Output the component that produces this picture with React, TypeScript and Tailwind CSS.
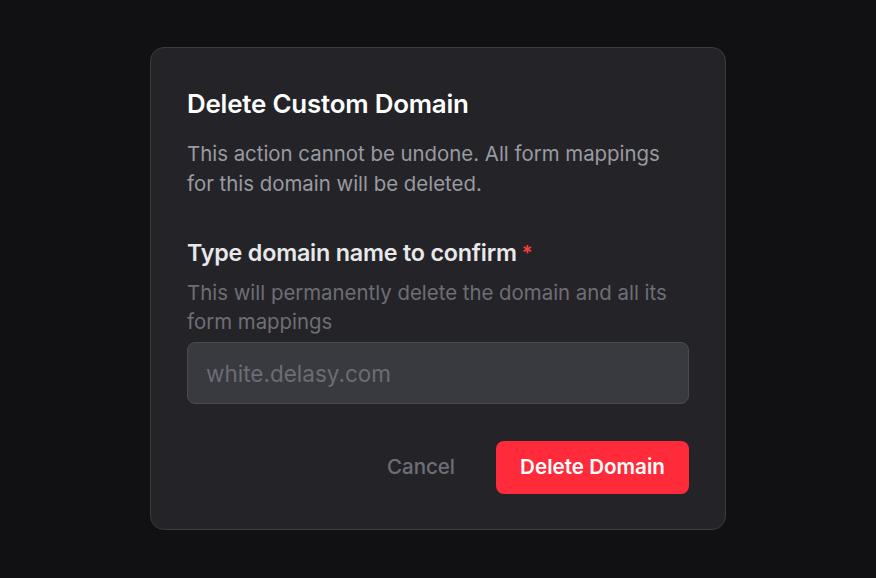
export default function App() {
  return (
    <div className="w-[876px] h-[578px] bg-[#111113] flex items-start justify-center pt-[47px]" style={{ fontFamily: 'Inter, "Noto Sans", sans-serif' }}>
      <div className="w-[576px] h-[483px] rounded-[14px] border border-[#3a3a3f] bg-[#242428] px-[36px] pt-[40px] flex flex-col">
        <h2 className="text-[25.9px] leading-[32px] font-semibold tracking-[-0.2px] text-white">Delete Custom Domain</h2>
        <p className="mt-[19px] text-[20.4px] leading-[30px] text-[#9a9aa1]">
          This action cannot be undone. All form mappings for this domain will be deleted.
        </p>
        <div className="mt-[39px] flex items-center gap-[5px]">
          <span className="text-[23.3px] leading-[30px] font-semibold tracking-[-0.2px] text-[#e8e8ea]">Type domain name to confirm</span>
          <span className="text-[#ff3b3b] text-[20px] font-semibold">*</span>
        </div>
        <p className="mt-[10px] text-[20.4px] leading-[29px] text-[#6e6e75]">
          This will permanently delete the domain and all its form mappings
        </p>
        <input
          className="mt-[6px] h-[62px] w-full rounded-[8px] border border-[#4a4a51] bg-[#393940] px-[18px] text-[22.5px] text-white placeholder-[#6c6c73] outline-none"
          placeholder="white.delasy.com"
        />
        <div className="mt-[37px] flex items-center justify-end gap-[41px]">
          <button className="text-[20.5px] font-medium text-[#6e6e75]">Cancel</button>
          <button className="h-[53px] w-[193px] rounded-[8px] bg-[#ff2a3a] text-[20.6px] font-semibold text-white">Delete Domain</button>
        </div>
      </div>
    </div>
  );
}
